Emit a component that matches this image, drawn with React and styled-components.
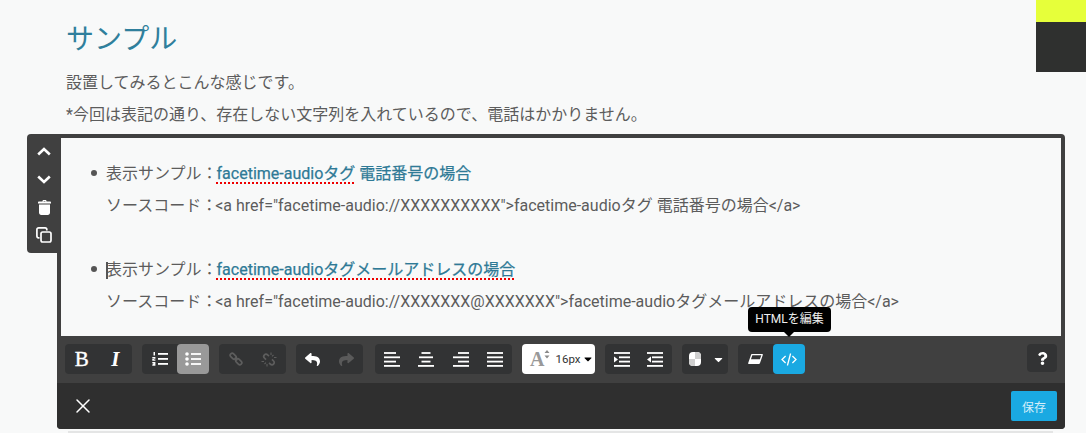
import React from "react";
import styled, { createGlobalStyle } from "styled-components";
import { FaReply, FaShare, FaQuestion, FaCaretDown } from "react-icons/fa";
import { X } from "lucide-react";

const Global = createGlobalStyle`
  html, body { margin: 0; padding: 0; background: #f8f9f9; }
  body {
    font-family: Roboto, "Noto Sans CJK JP", sans-serif;
    color: #5c5c5c;
    font-size: 16px;
    overflow: hidden;
  }
`;

const Page = styled.div`
  position: relative;
  width: 1086px;
  height: 433px;
  overflow: hidden;
`;
const Corner = styled.div`
  position: absolute;
  top: 0;
  right: 0;
  width: 50px;
  height: 72px;
  background: #2f302f;
  &::before {
    content: "";
    display: block;
    height: 22px;
    background: #e6ff3a;
  }
`;
const Intro = styled.div`
  padding: 20px 0 0 66px;
  height: 116px;
  box-sizing: border-box;
`;
const Title = styled.h2`
  margin: 0 0 12px;
  font-size: 28px;
  line-height: 40px;
  font-weight: 400;
  color: #2f7f9c;
`;
const Para = styled.p`
  margin: 0 0 10px;
  font-size: 16px;
  line-height: 22px;
`;

const Editor = styled.div`
  position: relative;
  margin: 18px 0 0 57px;
  width: 1008px;
  height: 295px;
  background: #404040;
  border-radius: 4px;
  display: flex;
  flex-direction: column;
`;
const SideTab = styled.div`
  position: absolute;
  left: -30px;
  top: 0;
  width: 34px;
  height: 119px;
  background: #404040;
  border-radius: 4px 0 0 4px;
  padding-top: 3px;
  box-sizing: border-box;
`;
const SideButton = styled.div`
  height: 28px;
  display: flex;
  align-items: center;
  justify-content: center;
  svg { display: block; }
`;
const Content = styled.div`
  margin: 4px 4px 0;
  height: 198px;
  background: #f8f9f9;
  padding: 20px 0 0 45px;
  box-sizing: border-box;
`;
const Bullet = styled.div`
  position: relative;
  height: 64px;
  margin-bottom: 32px;
  &::before {
    content: "";
    position: absolute;
    left: -15px;
    top: 12px;
    width: 6px;
    height: 6px;
    border-radius: 50%;
    background: #555;
  }
`;
const Line = styled.div`
  height: 32px;
  line-height: 32px;
  font-size: 16px;
  white-space: nowrap;
  color: #5c5c5c;
`;
const Code = styled.span`
  margin-left: -2px;
`;
const Caret = styled.span`
  position: absolute;
  left: 0;
  top: 8px;
  width: 2px;
  height: 17px;
  background: #555;
`;
const SampleLink = styled.a`
  color: #2f7a96;
  margin-left: -1px;
  -webkit-text-stroke: 0.25px #2f7a96;
  text-decoration: none;
`;
const Misspelt = styled.span`
  text-decoration: underline dotted #ee0000 2px;
  text-underline-offset: 3px;
`;

const Toolbar = styled.div`
  height: 47px;
  display: flex;
  align-items: flex-start;
  padding: 8px 8px 0 8px;
  box-sizing: border-box;
  gap: 10px;
  background: #404040;
`;
const Group = styled.div`
  display: flex;
  height: 30px;
  background: #323334;
  border-radius: 4px;
  margin-left: ${p => p.$gap || 0}px;
`;
const Tool = styled.div`
  width: ${p => p.$w || 33.5}px;
  height: 30px;
  display: flex;
  align-items: center;
  justify-content: center;
  color: ${p => (p.$off ? "#5a5a5a" : "#fff")};
  background: ${p => (p.$on ? "#999" : p.$blue ? "#1aa9e2" : "transparent")};
  border-radius: 4px;
  svg { display: block; }
`;
const Letter = styled.span`
  font-family: "Liberation Serif", serif;
  font-size: 21px;
  font-weight: ${p => (p.$italic ? 700 : 400)};
  font-style: ${p => (p.$italic ? "italic" : "normal")};
  -webkit-text-stroke: ${p => (p.$italic ? 0 : 0.4)}px #fff;
  color: #fff;
`;
const FontSize = styled.div`
  width: 73px;
  height: 30px;
  background: #fff;
  border-radius: 4px;
  display: flex;
  align-items: center;
  padding-left: 8px;
  box-sizing: border-box;
  color: #333;
  font-size: 11.5px;
  svg { display: block; }
`;
const FontA = styled.span`
  font-family: "Liberation Serif", serif;
  font-size: 20px;
  font-weight: 700;
  color: #999;
  line-height: 20px;
`;
const FontValue = styled.span`
  margin: 0 2px 0 5px;
`;
const Help = styled(Group)`
  margin-left: auto;
  width: 30px;
  height: 28px;
  align-items: center;
  justify-content: center;
  color: #fff;
`;
const Tooltip = styled.div`
  position: absolute;
  left: 691px;
  top: 173px;
  width: 83px;
  height: 25px;
  background: #000;
  border-radius: 4px;
  color: #eee;
  font-size: 12px;
  line-height: 25px;
  text-align: center;
  &::after {
    content: "";
    position: absolute;
    left: 36px;
    top: 25px;
    border: 5px solid transparent;
    border-top-color: #000;
    border-bottom: 0;
  }
`;
const Footer = styled.div`
  flex: 1;
  background: #2f2f2f;
  border-radius: 0 0 4px 4px;
  display: flex;
  align-items: center;
  justify-content: space-between;
  padding: 0 8px 0 14px;
`;
const SaveButton = styled.button`
  width: 46px;
  height: 30px;
  border: 0;
  padding: 0;
  border-radius: 2px;
  background: #1aa9e2;
  color: #d5eef9;
  font-family: inherit;
  font-size: 12px;
`;
const NextRule = styled.div`
  margin: 2px 0 0 68px;
  width: 985px;
  height: 2px;
  background: #e4e5e5;
`;

const rows = [1, 5.3, 9.6, 13.9];

// alignment lines: each row is [x, width]
const LinesIcon = ({ spec }) => (
  <svg width="16" height="15" viewBox="0 0 16 15" fill="#fff">
    {rows.map((y, i) => (
      <rect key={y} x={spec[i][0]} y={y - 0.9} width={spec[i][1]} height="1.8" />
    ))}
  </svg>
);
const alignLeft = [[0, 12], [0, 16], [0, 12], [0, 16]];
const alignCenter = [[3.5, 9], [1, 14], [3.5, 9], [0, 16]];
const alignRight = [[5, 11], [0, 16], [5, 11], [0, 16]];
const alignFull = [[0, 16], [0, 16], [0, 16], [0, 16]];

const IndentIcon = ({ out }) => (
  <svg width="16" height="15" viewBox="0 0 16 15" fill="#fff">
    <rect x="0" y="0.1" width="16" height="1.8" />
    <rect x="5" y="4.4" width="11" height="1.8" />
    <rect x="5" y="8.7" width="11" height="1.8" />
    <rect x="0" y="13" width="16" height="1.8" />
    {out ? <path d="M4 4.5V10.5L0 7.5Z" /> : <path d="M0 4.5V10.5L4 7.5Z" />}
  </svg>
);
const OrderedIcon = () => (
  <svg width="16" height="14" viewBox="0 0 16 14" fill="#fff">
    <rect x="6" y="1" width="10" height="1.8" />
    <rect x="6" y="6" width="10" height="1.8" />
    <rect x="6" y="11" width="10" height="1.8" />
    <path d="M1.5 0H3V3.6H1.5ZM0.3 5H3.4V6.8H1.9V7.4H3.4V8.8H0.3V7H1.8V6.4H0.3ZM0.3 10H3.4V13.8H0.3V12.6H1.9V12.4H0.8V11.4H1.9V11.2H0.3Z" />
  </svg>
);
const BulletIcon = () => (
  <svg width="16" height="14" viewBox="0 0 16 14" fill="#fff">
    <circle cx="2" cy="2" r="1.8" />
    <circle cx="2" cy="7" r="1.8" />
    <circle cx="2" cy="12" r="1.8" />
    <rect x="6" y="1.1" width="10" height="1.8" />
    <rect x="6" y="6.1" width="10" height="1.8" />
    <rect x="6" y="11.1" width="10" height="1.8" />
  </svg>
);
const LinkIcon = () => (
  <svg width="14" height="14" viewBox="0 0 14 14" fill="none" stroke="#5d5d5d" strokeWidth="1.7">
    <rect x="-3.4" y="-2" width="6.8" height="4" rx="2" transform="translate(4.2 4.2) rotate(45)" />
    <rect x="-3.4" y="-2" width="6.8" height="4" rx="2" transform="translate(9.8 9.8) rotate(45)" />
    <path d="M5.7 5.7 8.3 8.3" />
  </svg>
);
const UnlinkIcon = () => (
  <svg width="16" height="15" viewBox="0 0 16 15" fill="none" stroke="#5d5d5d" strokeWidth="1.7">
    <path d="M8 4 6.6 2.9a2.2 2.2 0 0 0-3.2 3.1L5 7.6M8 11l1.4 1.1a2.2 2.2 0 0 0 3.2-3.1L11 7.4" />
    <path strokeWidth="1.1" d="M10 .5V3M12.5 3 11 4.3M15.5 5.5H13M.5 9.5H3M3.5 12 5 10.7M6 14.5V12" />
  </svg>
);
const ChevronIcon = ({ down }) => (
  <svg width="14" height="9" viewBox="0 0 14 9" fill="none" stroke="#fff" strokeWidth="2.6">
    <path d={down ? "M1.2 1.5 7 7 12.8 1.5" : "M1.2 7.5 7 2 12.8 7.5"} />
  </svg>
);
const TrashIcon = () => (
  <svg width="13" height="15" viewBox="0 0 13 15" fill="#fff">
    <path d="M4.5 1.2C4.5.5 5 0 5.6 0H7.4C8 0 8.5.5 8.5 1.2V1.6H12.2C12.7 1.6 13 2 13 2.4V3.4H0V2.4C0 2 .3 1.6.8 1.6H4.5ZM5.6 1V1.6H7.4V1Z" />
    <path d="M1 4.5H12V12.8C12 14 11 15 9.8 15H3.2C2 15 1 14 1 12.8Z" />
  </svg>
);
const CloneIcon = () => (
  <svg width="16" height="16" viewBox="0 0 16 16" fill="none" stroke="#fff" strokeWidth="1.7">
    <path d="M3.5 10.8H2.6A1.7 1.7 0 0 1 .9 9.1V2.6A1.7 1.7 0 0 1 2.6.9H9.1A1.7 1.7 0 0 1 10.8 2.6V3.5" />
    <rect x="5" y="5" width="10" height="10" rx="1.7" />
  </svg>
);
const EraserIcon = () => (
  <svg width="15" height="10" viewBox="0 0 15 10">
    <path d="M3.6 0H14C14.7 0 15 .5 14.8 1L12 9C11.8 9.6 11.4 10 10.8 10H1C.3 10 0 9.5.2 9L3 1C3.2.4 3.6 0 3.6 0Z" fill="#fff" />
    <path d="M4.3 1.3H13.3L11.9 5.2H3Z" fill="#323334" />
  </svg>
);
const CodeIcon = () => (
  <svg width="16" height="13" viewBox="0 0 16 13" fill="none" stroke="#fff" strokeWidth="1.3">
    <path d="M4.6 3 1 6.5 4.6 10M11.4 3 15 6.5 11.4 10M9.6 0.5 6.4 12.5" />
  </svg>
);
const ColorIcon = () => (
  <svg width="12" height="14" viewBox="0 0 12 14">
    <rect width="12" height="14" rx="4" fill="#fff" />
    <path d="M6 0H8A4 4 0 0 1 12 4V7H6ZM0 7H6V14H4A4 4 0 0 1 0 10Z" fill="#cfcfcf" />
  </svg>
);
const SizeArrows = () => (
  <svg width="6" height="9" viewBox="0 0 6 9" style={{ alignSelf: "flex-start", marginTop: 6 }}>
    <path d="M3 0 5.5 3H.5ZM3 8.5 5.5 5.5H.5Z" fill="#8a8a8a" />
  </svg>
);

export default function App() {
  return (
    <Page>
      <Global />
      <Corner />
      <Intro>
        <Title>サンプル</Title>
        <Para>設置してみるとこんな感じです。</Para>
        <Para>*今回は表記の通り、存在しない文字列を入れているので、電話はかかりません。</Para>
      </Intro>
      <Editor>
        <SideTab>
          <SideButton><ChevronIcon /></SideButton>
          <SideButton><ChevronIcon down /></SideButton>
          <SideButton><TrashIcon /></SideButton>
          <SideButton><CloneIcon /></SideButton>
        </SideTab>
        <Content>
          <Bullet>
            <Line>
              表示サンプル：
              <SampleLink href="#"><Misspelt>facetime-audioタグ</Misspelt> 電話番号の場合</SampleLink>
            </Line>
            <Line>ソースコード：<Code>&lt;a href="facetime-audio://XXXXXXXXXX"&gt;facetime-audioタグ 電話番号の場合&lt;/a&gt;</Code></Line>
          </Bullet>
          <Bullet>
            <Caret />
            <Line>
              表示サンプル：
              <SampleLink href="#"><Misspelt>facetime-audioタグメールアドレスの場合</Misspelt></SampleLink>
            </Line>
            <Line>ソースコード：<Code>&lt;a href="facetime-audio://XXXXXXX@XXXXXXX"&gt;facetime-audioタグメールアドレスの場合&lt;/a&gt;</Code></Line>
          </Bullet>
        </Content>
        <Toolbar>
          <Group>
            <Tool><Letter>B</Letter></Tool>
            <Tool><Letter $italic>I</Letter></Tool>
          </Group>
          <Group>
            <Tool $w={35}><OrderedIcon /></Tool>
            <Tool $w={32} $on><BulletIcon /></Tool>
          </Group>
          <Group>
            <Tool><LinkIcon /></Tool>
            <Tool><UnlinkIcon /></Tool>
          </Group>
          <Group>
            <Tool><FaReply size={15} /></Tool>
            <Tool $off><FaShare size={15} /></Tool>
          </Group>
          <Group $gap={2}>
            <Tool $w={34.25}><LinesIcon spec={alignLeft} /></Tool>
            <Tool $w={34.25}><LinesIcon spec={alignCenter} /></Tool>
            <Tool $w={34.25}><LinesIcon spec={alignRight} /></Tool>
            <Tool $w={34.25}><LinesIcon spec={alignFull} /></Tool>
          </Group>
          <FontSize>
            <FontA>A</FontA>
            <SizeArrows />
            <FontValue>16px</FontValue>
            <FaCaretDown color="#000" size={12} />
          </FontSize>
          <Group>
            <Tool><IndentIcon /></Tool>
            <Tool><IndentIcon out /></Tool>
          </Group>
          <Group>
            <Tool $w={26}><ColorIcon /></Tool>
            <Tool $w={20}><FaCaretDown size={13} /></Tool>
          </Group>
          <Group>
            <Tool $w={35}><EraserIcon /></Tool>
            <Tool $w={32} $blue><CodeIcon /></Tool>
          </Group>
          <Help><FaQuestion size={13} /></Help>
        </Toolbar>
        <Tooltip>HTMLを編集</Tooltip>
        <Footer>
          <X size={24} color="#fff" strokeWidth={1.5} />
          <SaveButton>保存</SaveButton>
        </Footer>
      </Editor>
      <NextRule />
    </Page>
  );
}
